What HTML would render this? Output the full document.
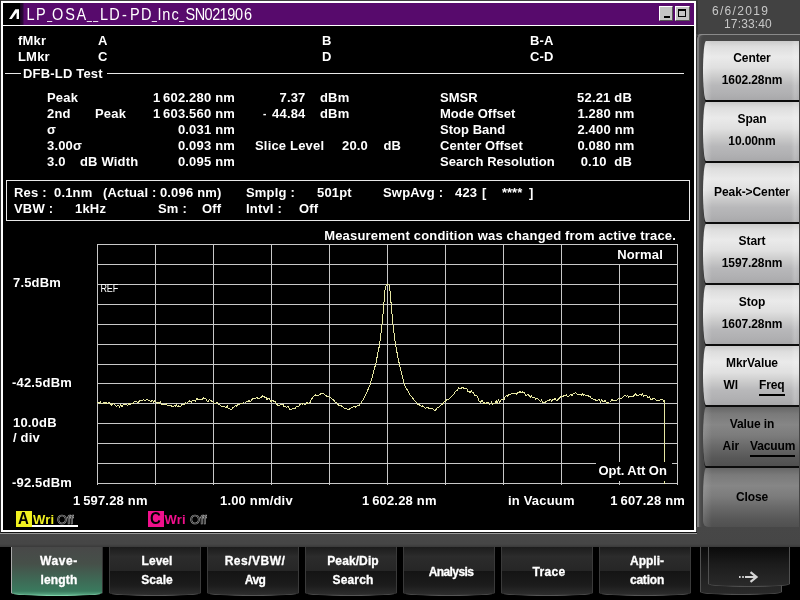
<!DOCTYPE html>
<html><head><meta charset="utf-8"><title>OSA</title>
<style>
html,body{margin:0;padding:0;}
body{width:800px;height:600px;overflow:hidden;background:#424242;position:relative;font-family:"Liberation Sans",sans-serif;}
#win{position:absolute;left:1px;top:1px;width:691px;height:527px;border:2px solid #fff;background:#000;overflow:hidden;}
/* coordinates inside #win are page coords via #w0 wrapper offset */
#w0{will-change:transform;position:absolute;left:-3px;top:-3px;width:800px;height:600px;}
#title{position:absolute;left:3px;top:3px;width:691px;height:22px;background:#000;}
#title .bar{position:absolute;left:17px;top:0;right:0;height:22px;background:linear-gradient(90deg,#16041e 0,#2a0838 3px,#570a6c 4px,#570a6c 100%);}
#title .txt{position:absolute;left:22px;top:3px;font-size:15px;line-height:18px;color:#fff;letter-spacing:0;white-space:pre;}
#tline{position:absolute;left:3px;top:25px;width:691px;height:1px;background:#fff;}
.wb{position:absolute;top:3px;width:14px;height:15px;background:#c4c4c4;border:1px solid;border-color:#fff #555 #555 #fff;box-sizing:border-box;}
.t{position:absolute;transform:scaleY(1.04);transform-origin:0 12px;letter-spacing:0.18px;font-weight:bold;font-size:13px;line-height:16px;color:#fff;white-space:pre;}
.off{color:transparent;font-weight:normal;-webkit-text-stroke:0.65px #a0a0a0;letter-spacing:-0.2px;}
.hl{position:absolute;height:1px;background:#e8e8e8;}
#resbox{position:absolute;left:6px;top:180px;width:682px;height:39px;border:1px solid #e8e8e8;}
#plot{position:absolute;left:97px;top:244px;}
#plot line{stroke:#c8c8c8;stroke-width:1;shape-rendering:crispEdges;}
/* right panel */
#rp{position:absolute;left:696px;top:34px;width:104px;height:493px;background:#464646;border-top:1px solid #8a8a8a;border-left:1px solid #2c2c2c;box-shadow:inset 2px 0 0 #7c7c7c,inset 5px 0 3px -2px #5e5e5e;border-top-left-radius:5px;box-sizing:border-box;}
.rb{will-change:transform;position:absolute;left:703px;width:96px;height:59px;border-radius:3px 0 0 3px / 50% 0 0 50%;background:linear-gradient(90deg,rgba(255,255,255,.28) 0,rgba(255,255,255,0) 9px,rgba(255,255,255,0) 88px,rgba(255,255,255,.18) 92px,rgba(255,255,255,.1) 95px),linear-gradient(180deg,#cacaca 0,#dedede 10%,#eaeaea 27%,#e0e0e0 45%,#cccccc 60%,#b8b8ba 75%,#b0b0b2 90%,#a8a8aa 100%);color:#000;font-weight:bold;font-size:12px;text-align:center;box-shadow:0 2px 0 #0c0c0c;letter-spacing:-0.1px;}
.rb.dk{background:linear-gradient(90deg,rgba(255,255,255,.12) 0,rgba(255,255,255,0) 9px),linear-gradient(180deg,#666 0,#7a7a7a 12%,#868686 30%,#7c7c7c 48%,#666 70%,#585858 86%,#505050 100%);}
.rb div{position:absolute;left:1px;width:96px;white-space:pre;line-height:14px;}
.rb .l1{top:10px;}
.rb .l2{top:32px;}
.rb .l0{top:22px;}
.ul{border-bottom:2px solid #000;padding-bottom:2px;}
.rb.last{box-shadow:none;border-radius:3px 0 0 5px / 30px 0 0 6px;}
#date,#date2{will-change:transform;position:absolute;left:712px;top:5px;color:#c8c8c8;font-size:12px;line-height:13px;letter-spacing:1.3px;white-space:pre;}
#date2{left:724px;top:18px;letter-spacing:0.15px;}
/* bottom */
#band{position:absolute;left:0;top:527px;width:800px;height:20px;background:linear-gradient(180deg,#474747 0,#464646 85%,#3a3a3a 100%);}
#bot{position:absolute;left:0;top:547px;width:800px;height:53px;background:#000;}
.bb{will-change:transform;position:absolute;top:547px;width:92px;height:49px;box-sizing:border-box;border-left:1px solid #3a3a3a;border-right:1px solid #3a3a3a;border-bottom:1px solid #555;border-radius:0 0 45px 45px / 0 0 3px 3px;background:linear-gradient(180deg,#1c1c1c 0,#2c2c2c 20%,#262626 49%,#141414 51%,#1c1c1c 80%,#2e2e2e 100%);color:#fff;font-weight:bold;font-size:12px;text-align:center;letter-spacing:0;}
.bb.sel{background:linear-gradient(180deg,#484848 0,#465049 35%,#3e6a56 70%,#3a7a5e 92%,#58a884 100%);border-color:#ddd #333 #7fd0a8 #ccc;border-left-color:#aaa;}
.bb div{position:absolute;left:1px;width:92px;line-height:14px;white-space:pre;}
.bb .b1{top:7px;} .bb .b2{top:26px;} .bb .b0{top:18px;}
.bb.ar{background:linear-gradient(180deg,#0a0a0a 0,#1c1c1c 45%,#2a2a2a 100%);border-color:#505050;border-radius:0 0 40px 40px / 0 0 3px 3px;}
.bb span{-webkit-text-stroke:0.3px #fff;}
</style></head><body>
<div id="band"></div>
<div style="position:absolute;left:0;top:532px;width:697px;height:1px;background:#141414"></div><div style="position:absolute;left:0;top:533px;width:697px;height:1px;background:#9a9a9a"></div>
<div style="position:absolute;left:0;top:0;width:1px;height:533px;background:#2c2c2c"></div><div style="position:absolute;left:696px;top:0;width:2px;height:34px;background:#343434"></div>
<div id="win"><div id="w0">
<div id="title"><div class="bar"></div>
<svg style="position:absolute;left:4px;top:3px" width="14" height="14" viewBox="0 0 14 14"><path d="M2 13 L4.8 13 L9.6 6.5 L9.6 13 L12 13 L12 3.3 L8.3 3.3 Z" fill="#fff"/></svg>
<svg style="position:absolute;left:0;top:0" width="300" height="22" viewBox="0 0 300 22"><text x="27.50 37.80 46.60 54.60 67.10 78.45 86.40 92.70 101.00 111.50 121.35 131.80 143.20 151.30 156.40 163.40 172.15 178.50 187.25 197.05 205.50 213.40 220.60 228.30 236.15 245.10" y="0" transform="translate(0,16.8) scale(1,1.08)" text-anchor="middle" font-family="Liberation Sans, sans-serif" font-size="14.5" fill="#fff">LP<tspan font-size="8.5" font-weight="bold" stroke="#fff" stroke-width=".35" dy="0.8">_</tspan><tspan dy="-0.8">OSA</tspan><tspan font-size="8.5" font-weight="bold" stroke="#fff" stroke-width=".35" dy="0.8">_</tspan><tspan font-size="8.5" font-weight="bold" stroke="#fff" stroke-width=".35">_</tspan><tspan dy="-0.8">LD-PD</tspan><tspan font-size="8.5" font-weight="bold" stroke="#fff" stroke-width=".35" dy="0.8">_</tspan><tspan dy="-0.8">Inc</tspan><tspan font-size="8.5" font-weight="bold" stroke="#fff" stroke-width=".35" dy="0.8">_</tspan><tspan dy="-0.8">SN021906</tspan></text></svg>
<div class="wb" style="left:656px"><div style="position:absolute;left:4px;top:9px;width:6px;height:2px;background:#000"></div></div>
<div class="wb" style="left:672px;width:15px"><div style="position:absolute;left:2px;top:2px;width:8px;height:8px;border:1px solid #000;border-top-width:2px;box-sizing:border-box"></div></div>
</div>
<div id="tline"></div>
<div class="hl" style="left:5px;top:73px;width:16px"></div>
<div class="hl" style="left:107px;top:73px;width:577px"></div>
<div id="resbox"></div>
<svg id="plot" width="582" height="242" viewBox="0 0 582 242"><line x1="0.5" y1="0" x2="0.5" y2="241"/><line x1="58.5" y1="0" x2="58.5" y2="241"/><line x1="116.5" y1="0" x2="116.5" y2="241"/><line x1="174.5" y1="0" x2="174.5" y2="241"/><line x1="232.5" y1="0" x2="232.5" y2="241"/><line x1="290.5" y1="0" x2="290.5" y2="241"/><line x1="348.5" y1="0" x2="348.5" y2="241"/><line x1="406.5" y1="0" x2="406.5" y2="241"/><line x1="464.5" y1="0" x2="464.5" y2="241"/><line x1="522.5" y1="0" x2="522.5" y2="241"/><line x1="580.5" y1="0" x2="580.5" y2="241"/><line x1="0" y1="0.5" x2="581" y2="0.5"/><line x1="0" y1="20.5" x2="581" y2="20.5"/><line x1="0" y1="40.5" x2="581" y2="40.5"/><line x1="0" y1="60.5" x2="581" y2="60.5"/><line x1="0" y1="80.5" x2="581" y2="80.5"/><line x1="0" y1="100.5" x2="581" y2="100.5"/><line x1="0" y1="120.5" x2="581" y2="120.5"/><line x1="0" y1="139.5" x2="581" y2="139.5"/><line x1="0" y1="159.5" x2="581" y2="159.5"/><line x1="0" y1="179.5" x2="581" y2="179.5"/><line x1="0" y1="199.5" x2="581" y2="199.5"/><line x1="0" y1="219.5" x2="581" y2="219.5"/><line x1="0" y1="239.5" x2="581" y2="239.5"/>
<polyline points="0.0,158.5 1.1,158.0 2.3,159.6 3.4,157.9 4.5,159.4 5.7,159.0 6.8,158.1 7.9,159.5 9.1,158.3 10.2,159.6 11.3,158.7 12.5,158.9 13.6,160.1 14.7,161.5 15.9,159.6 17.0,160.0 18.1,161.4 19.3,162.5 20.4,161.6 21.5,161.2 22.7,163.1 23.8,160.5 24.9,163.1 26.1,161.1 27.2,160.4 28.3,160.0 29.5,160.3 30.6,161.5 31.8,159.4 32.9,160.3 34.0,160.2 35.2,159.1 36.3,159.3 37.4,157.6 38.6,157.3 39.7,157.4 40.8,158.6 42.0,157.4 43.1,156.7 44.2,157.1 45.4,156.3 46.5,155.4 47.6,156.5 48.8,156.2 49.9,155.0 51.0,156.2 52.2,156.2 53.3,157.4 54.4,157.1 55.6,156.1 56.7,158.6 57.8,156.5 59.0,157.9 60.1,159.4 61.2,158.0 62.4,159.2 63.5,158.0 64.6,160.0 65.8,160.5 66.9,160.1 68.0,161.1 69.2,159.7 70.3,161.1 71.4,161.0 72.6,161.2 73.7,161.1 74.8,162.5 76.0,162.9 77.1,161.6 78.2,162.3 79.4,160.6 80.5,162.5 81.6,162.0 82.8,162.8 83.9,162.0 85.1,160.1 86.2,160.1 87.3,160.7 88.5,158.4 89.6,159.3 90.7,158.0 91.9,157.4 93.0,156.8 94.1,158.5 95.3,156.2 96.4,156.1 97.5,156.2 98.7,157.2 99.8,154.5 100.9,155.2 102.1,155.1 103.2,155.8 104.3,155.2 105.5,155.2 106.6,153.9 107.7,154.7 108.9,154.9 110.0,156.8 111.1,157.4 112.3,155.6 113.4,156.2 114.5,157.0 115.7,157.5 116.8,158.9 117.9,159.6 119.1,158.9 120.2,158.5 121.3,160.1 122.5,160.3 123.6,161.3 124.7,162.8 125.9,162.4 127.0,162.2 128.1,162.9 129.3,163.5 130.4,162.0 131.5,164.9 132.7,164.9 133.8,165.6 134.9,165.0 136.1,163.3 137.2,162.8 138.3,161.4 139.5,162.6 140.6,160.4 141.8,160.0 142.9,160.0 144.0,159.5 145.2,159.7 146.3,158.5 147.4,158.0 148.6,158.1 149.7,157.5 150.8,157.7 152.0,156.1 153.1,158.1 154.2,156.7 155.4,154.8 156.5,154.7 157.6,154.5 158.8,154.1 159.9,152.9 161.0,154.8 162.2,155.0 163.3,153.2 164.4,153.1 165.6,151.9 166.7,152.4 167.8,153.5 169.0,153.6 170.1,155.7 171.2,154.1 172.4,154.3 173.5,157.6 174.6,156.9 175.8,156.3 176.9,158.1 178.0,157.1 179.2,159.2 180.3,161.1 181.4,161.3 182.6,161.4 183.7,160.4 184.8,161.0 186.0,160.6 187.1,162.6 188.2,162.2 189.4,163.5 190.5,162.7 191.6,163.0 192.8,165.3 193.9,165.8 195.0,165.1 196.2,164.8 197.3,164.6 198.4,164.1 199.6,162.4 200.7,163.0 201.9,161.9 203.0,160.4 204.1,159.9 205.3,160.1 206.4,159.6 207.5,160.3 208.7,160.5 209.8,158.4 210.9,159.3 212.1,158.9 213.2,158.2 214.3,155.3 215.5,153.7 216.6,152.6 217.7,151.4 218.9,150.8 220.0,151.6 221.1,151.3 222.3,150.8 223.4,150.0 224.5,149.8 225.7,149.7 226.8,149.5 227.9,150.8 229.1,151.8 230.2,152.3 231.3,152.9 232.5,153.2 233.6,153.5 234.7,155.0 235.9,155.2 237.0,156.6 238.1,158.0 239.3,158.4 240.4,159.5 241.5,161.3 242.7,161.7 243.8,161.7 244.9,162.2 246.1,162.8 247.2,164.3 248.3,164.8 249.5,164.6 250.6,165.8 251.7,165.6 252.9,164.7 254.0,163.9 255.1,163.7 256.3,162.8 257.4,162.2 258.6,163.0 259.7,162.2 260.8,161.6 262.0,161.7 263.1,160.1 264.2,158.4 265.4,156.7 266.5,155.0 267.6,153.2 268.8,150.6 269.9,148.1 271.0,145.5 272.2,142.9 273.3,139.9 274.4,135.8 275.6,131.7 276.7,127.6 277.8,123.4 279.0,118.7 280.1,113.0 281.2,107.3 282.4,101.7 283.5,93.0 284.6,83.9 285.8,72.2 286.9,59.3 288.0,46.3 289.2,40.8 290.3,40.4 291.4,40.6 292.6,41.8 293.7,54.8 294.8,67.7 296.0,80.7 297.1,89.9 298.2,98.9 299.4,105.4 300.5,111.0 301.6,116.7 302.8,122.1 303.9,126.6 305.0,131.2 306.2,135.7 307.3,140.3 308.4,142.7 309.6,144.8 310.7,146.8 311.9,148.9 313.0,151.0 314.1,152.3 315.3,153.6 316.4,155.0 317.5,156.3 318.7,157.6 319.8,158.9 320.9,160.5 322.1,160.8 323.2,161.5 324.3,162.2 325.5,161.9 326.6,162.9 327.7,163.9 328.9,164.1 330.0,163.6 331.1,163.8 332.3,164.5 333.4,164.3 334.5,164.8 335.7,164.9 336.8,165.9 337.9,166.3 339.1,165.6 340.2,163.8 341.3,163.6 342.5,162.6 343.6,161.0 344.7,160.7 345.9,159.7 347.0,157.7 348.1,157.5 349.3,156.1 350.4,155.6 351.5,155.5 352.7,154.7 353.8,153.2 354.9,152.3 356.1,151.0 357.2,149.4 358.3,147.8 359.5,146.5 360.6,146.1 361.7,143.8 362.9,145.1 364.0,144.5 365.1,142.9 366.3,143.6 367.4,144.7 368.6,144.9 369.7,144.1 370.8,147.4 372.0,147.4 373.1,148.5 374.2,146.9 375.4,148.3 376.5,148.6 377.6,151.8 378.8,151.3 379.9,151.9 381.0,154.1 382.2,157.2 383.3,158.3 384.4,156.9 385.6,156.9 386.7,159.5 387.8,158.8 389.0,159.5 390.1,158.0 391.2,158.2 392.4,160.4 393.5,159.6 394.6,158.2 395.8,160.5 396.9,159.2 398.0,159.4 399.2,156.9 400.3,158.9 401.4,156.2 402.6,158.2 403.7,156.4 404.8,155.3 406.0,155.2 407.1,155.5 408.2,152.8 409.4,151.6 410.5,152.1 411.6,150.9 412.8,150.2 413.9,150.0 415.0,149.4 416.2,149.5 417.3,149.5 418.4,149.2 419.6,150.2 420.7,148.5 421.8,148.8 423.0,147.5 424.1,148.4 425.2,147.8 426.4,148.9 427.5,148.6 428.7,151.2 429.8,151.0 430.9,150.3 432.1,151.6 433.2,153.4 434.3,151.3 435.5,153.9 436.6,153.2 437.7,153.9 438.9,155.3 440.0,154.5 441.1,155.3 442.3,156.3 443.4,157.6 444.5,156.1 445.7,158.1 446.8,158.1 447.9,158.4 449.1,157.5 450.2,157.1 451.3,156.0 452.5,156.0 453.6,155.6 454.7,157.4 455.9,155.7 457.0,155.2 458.1,154.7 459.3,156.5 460.4,156.2 461.5,155.1 462.7,153.5 463.8,152.9 464.9,152.6 466.1,152.6 467.2,151.3 468.3,151.8 469.5,151.0 470.6,152.8 471.7,152.6 472.9,151.0 474.0,149.9 475.1,151.8 476.3,149.6 477.4,149.5 478.5,148.4 479.7,149.8 480.8,150.3 482.0,150.6 483.1,150.0 484.2,151.2 485.4,149.9 486.5,151.0 487.6,150.7 488.8,151.9 489.9,151.2 491.0,151.5 492.2,152.7 493.3,152.9 494.4,154.3 495.6,154.5 496.7,155.5 497.8,155.6 499.0,156.2 500.1,157.0 501.2,155.8 502.4,155.9 503.5,158.1 504.6,155.8 505.8,157.7 506.9,157.7 508.0,156.1 509.2,158.7 510.3,159.1 511.4,158.1 512.6,158.0 513.7,157.9 514.8,155.5 516.0,156.3 517.1,155.9 518.2,156.5 519.4,156.1 520.5,155.8 521.6,154.7 522.8,155.3 523.9,154.4 525.0,154.2 526.2,152.6 527.3,151.7 528.4,151.8 529.6,152.3 530.7,151.3 531.8,153.2 533.0,152.2 534.1,152.2 535.2,152.0 536.4,152.0 537.5,151.3 538.6,149.7 539.8,151.9 540.9,151.6 542.1,150.7 543.2,150.7 544.3,151.4 545.5,150.1 546.6,152.5 547.7,151.4 548.9,151.3 550.0,152.2 551.1,154.0 552.3,152.9 553.4,154.8 554.5,155.8 555.7,154.6 556.8,154.5 557.9,155.0 559.1,155.9 560.2,156.4 561.3,156.2 562.5,156.5 563.6,155.1 564.7,155.5 565.9,156.1 567.0,157.7 567.5,157.0 567.5,240.0" fill="none" stroke="#e6e6a2" stroke-width="1" shape-rendering="crispEdges"/>
<rect x="520" y="1" width="60" height="19" fill="#000"/>
<rect x="499" y="218" width="76" height="19" fill="#000"/>
</svg>
<div class="t " style="left:18px;top:33px;">fMkr</div>
<div class="t " style="left:18px;top:49px;">LMkr</div>
<div class="t " style="left:98px;top:33px;">A</div>
<div class="t " style="left:98px;top:49px;">C</div>
<div class="t " style="left:322px;top:33px;">B</div>
<div class="t " style="left:322px;top:49px;">D</div>
<div class="t " style="left:530px;top:33px;">B-A</div>
<div class="t " style="left:530px;top:49px;">C-D</div>
<div class="t " style="left:23px;top:65.5px;">DFB-LD Test</div>
<div class="t " style="left:47px;top:90px;">Peak</div>
<div class="t " style="left:47px;top:106px;">2nd</div>
<div class="t " style="left:95px;top:106px;">Peak</div>
<div class="t " style="left:47px;top:122px;">σ</div>
<div class="t " style="left:47px;top:138px;">3.00σ</div>
<div class="t " style="left:47px;top:154px;">3.0</div>
<div class="t " style="left:80px;top:154px;">dB Width</div>
<div class="t " style="right:565px;top:90px;">1<span style="letter-spacing:-0.9px"> </span>602.280 nm</div>
<div class="t " style="right:565px;top:106px;">1<span style="letter-spacing:-0.9px"> </span>603.560 nm</div>
<div class="t " style="right:565px;top:122px;">0.031 nm</div>
<div class="t " style="right:565px;top:138px;">0.093 nm</div>
<div class="t " style="right:565px;top:154px;">0.095 nm</div>
<div class="t " style="right:494.5px;top:90px;">7.37</div>
<div class="t " style="right:494.5px;top:106px;">44.84</div>
<div class="t " style="left:263px;top:106px;font-size:10px;">-</div>
<div class="t " style="left:320px;top:90px;">dBm</div>
<div class="t " style="left:320px;top:106px;">dBm</div>
<div class="t " style="left:255px;top:138px;">Slice Level</div>
<div class="t " style="left:342px;top:138px;">20.0</div>
<div class="t " style="left:383.5px;top:138px;">dB</div>
<div class="t " style="left:440px;top:90px;letter-spacing:0.03px">SMSR</div>
<div class="t " style="left:440px;top:106px;letter-spacing:0.03px">Mode Offset</div>
<div class="t " style="left:440px;top:122px;letter-spacing:0.03px">Stop Band</div>
<div class="t " style="left:440px;top:138px;letter-spacing:0.03px">Center Offset</div>
<div class="t " style="left:440px;top:154px;letter-spacing:0.03px">Search Resolution</div>
<div class="t " style="right:168px;top:90px;">52.21 dB</div>
<div class="t " style="right:165.5px;top:106px;">1.280 nm</div>
<div class="t " style="right:165.5px;top:122px;">2.400 nm</div>
<div class="t " style="right:165.5px;top:138px;">0.080 nm</div>
<div class="t " style="right:168px;top:154px;">0.10&nbsp; dB</div>
<div class="t " style="left:14px;top:184.5px;">Res :</div>
<div class="t " style="left:54px;top:184.5px;">0.1nm</div>
<div class="t " style="left:103px;top:184.5px;">(Actual :</div>
<div class="t " style="right:578.5px;top:184.5px;">0.096 nm)</div>
<div class="t " style="left:246px;top:184.5px;">Smplg :</div>
<div class="t " style="left:317px;top:184.5px;">501pt</div>
<div class="t " style="left:383px;top:184.5px;">SwpAvg :</div>
<div class="t " style="left:455px;top:184.5px;">423</div>
<div class="t " style="left:482px;top:184.5px;">[</div>
<div class="t " style="left:502px;top:184.5px;letter-spacing:0">****</div>
<div class="t " style="left:529px;top:184.5px;">]</div>
<div class="t " style="left:14px;top:200.5px;">VBW :</div>
<div class="t " style="left:75px;top:200.5px;">1kHz</div>
<div class="t " style="left:158px;top:200.5px;">Sm :</div>
<div class="t " style="left:202px;top:200.5px;">Off</div>
<div class="t " style="left:246px;top:200.5px;">Intvl :</div>
<div class="t " style="left:299px;top:200.5px;">Off</div>
<div class="t " style="right:124px;top:227.5px;">Measurement condition was changed from active trace.</div>
<div class="t " style="right:137px;top:246.8px;">Normal</div>
<div class="t " style="left:13px;top:275px;">7.5dBm</div>
<div class="t " style="left:12px;top:375px;">-42.5dBm</div>
<div class="t " style="left:13px;top:415px;">10.0dB</div>
<div class="t " style="left:13px;top:430px;">/ div</div>
<div class="t " style="left:12px;top:475px;">-92.5dBm</div>
<div class="t " style="left:100.5px;top:281px;font-weight:normal;font-size:9px;letter-spacing:-0.15px;transform:scaleY(1.22);">REF</div>
<div class="t " style="left:598.5px;top:462.5px;letter-spacing:-0.05px">Opt. Att On</div>
<div class="t " style="left:73px;top:493px;">1<span style="letter-spacing:-0.9px"> </span>597.28 nm</div>
<div class="t " style="left:220px;top:493px;">1.00 nm/div</div>
<div class="t " style="left:362px;top:493px;">1<span style="letter-spacing:-0.9px"> </span>602.28 nm</div>
<div class="t " style="left:508px;top:493px;">in Vacuum</div>
<div class="t " style="right:115px;top:493px;">1<span style="letter-spacing:-0.9px"> </span>607.28 nm</div>
<!-- trace tags -->
<div style="position:absolute;left:16px;top:511px;width:16px;height:16px;background:#f0f020;"></div>
<div class="t" style="left:18px;top:511px;font-size:15px;color:#000;">A</div>
<div class="t" style="left:33px;top:511.5px;color:#f0f020;">Wri</div>
<div class="t off" style="left:57px;top:511.5px;">Off</div>
<div style="position:absolute;left:32px;top:525px;width:46px;height:2px;background:#fff;"></div>
<div style="position:absolute;left:148px;top:511px;width:16px;height:16px;background:#f0108c;"></div>
<div class="t" style="left:150px;top:511px;font-size:15px;color:#000;letter-spacing:0">C</div>
<div class="t" style="left:164.5px;top:511.5px;color:#f0108c;">Wri</div>
<div class="t off" style="left:190px;top:511.5px;">Off</div>
</div></div>
<div id="date">6/6/2019</div><div id="date2">17:33:40</div>
<div id="rp"></div>
<div class="rb " style="top:41px"><div class="l1">Center</div><div class="l2">1602.28nm</div></div>
<div class="rb " style="top:102px"><div class="l1">Span</div><div class="l2">10.00nm</div></div>
<div class="rb " style="top:163px"><div class="l0">Peak-&gt;Center</div></div>
<div class="rb " style="top:224px"><div class="l1">Start</div><div class="l2">1597.28nm</div></div>
<div class="rb " style="top:285px"><div class="l1">Stop</div><div class="l2">1607.28nm</div></div>
<div class="rb " style="top:346px"><div class="l1">MkrValue</div><div class="l2"><span style="margin-right:21px;margin-left:4px">Wl</span><span class="ul">Freq</span></div></div>
<div class="rb dk" style="top:407px"><div class="l1">Value in</div><div class="l2"><span style="margin-right:11px;margin-left:14px">Air</span><span class="ul">Vacuum</span></div></div>
<div class="rb dk last" style="top:468px"><div class="l0">Close</div></div>
<div id="bot"></div>
<div class="bb sel" style="left:11px"><div class="b1"><span style="letter-spacing:0.6px">Wave-</span></div><div class="b2"><span style="letter-spacing:0.2px">length</span></div></div>
<div class="bb " style="left:109px"><div class="b1"><span style="letter-spacing:0.05px">Level</span></div><div class="b2"><span style="letter-spacing:0.05px">Scale</span></div></div>
<div class="bb " style="left:207px"><div class="b1"><span style="letter-spacing:0.5px">Res/VBW/</span></div><div class="b2"><span style="letter-spacing:-0.6px">Avg</span></div></div>
<div class="bb " style="left:305px"><div class="b1"><span style="letter-spacing:0.1px">Peak/Dip</span></div><div class="b2"><span style="letter-spacing:0.15px">Search</span></div></div>
<div class="bb " style="left:403px"><div class="b0"><span style="letter-spacing:-0.6px">Analysis</span></div></div>
<div class="bb " style="left:501px"><div class="b0"><span style="letter-spacing:0.3px">Trace</span></div></div>
<div class="bb " style="left:599px"><div class="b1"><span style="letter-spacing:0px">Appli-</span></div><div class="b2"><span style="letter-spacing:-0.2px">cation</span></div></div>
<div class="bb ar" style="left:700px;width:82px;height:48px;"></div>
<div class="bb ar" style="left:708px;width:82px;height:40px;"></div>
<svg style="position:absolute;left:736px;top:570px" width="24" height="14" viewBox="0 0 24 14"><g fill="none" stroke="#d4d4d4" stroke-width="2"><path d="M3 7h1.6M6.2 7h1.6M9 7h11"/><path d="M14.5 2.2L20.5 7L14.5 11.8" stroke-width="2.2"/></g></svg>
</body></html>
